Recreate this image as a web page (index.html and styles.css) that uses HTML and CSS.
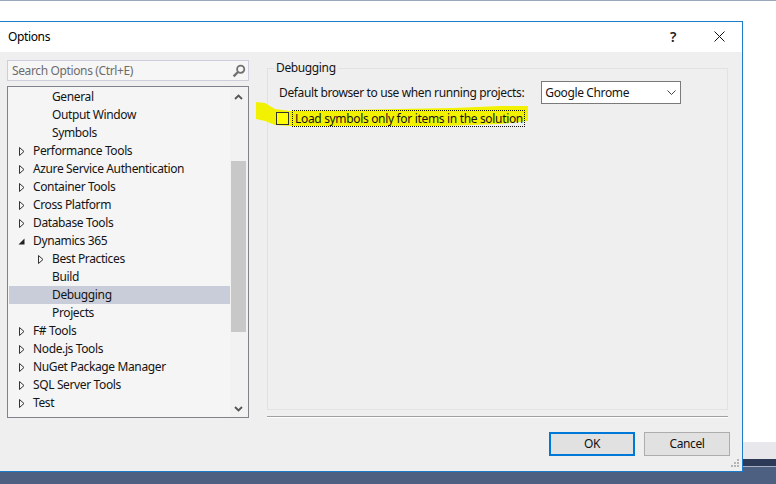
FILE: index.html
```html
<!DOCTYPE html>
<html lang="en">
<head>
<meta charset="utf-8">
<title>Options</title>
<link rel="stylesheet" href="styles.css">
</head>
<body>
<div class="desktop">
  <div class="backdrop">
    <div class="bd-top"></div>
    <div class="bd-white"></div>
    <div class="bd-gray"></div>
    <div class="bd-dark"></div>
    <div class="bd-blue"></div>
  </div>
  <div class="dialog">
    <header class="titlebar">
      <span class="title">Options</span>
      <span class="help">?</span>
      <svg class="close" width="11" height="11" viewBox="0 0 11 11"><path d="M0.5 0.5L10.5 10.5M10.5 0.5L0.5 10.5" stroke="#111" stroke-width="1" fill="none"/></svg>
    </header>
    <div class="body">
      <div class="main">
        <aside class="left">
          <div class="search">
            <span class="search-text">Search Options (Ctrl+E)</span>
            <svg class="search-icon" width="14" height="14" viewBox="0 0 14 14"><circle cx="8.7" cy="5.2" r="3.6" fill="none" stroke="#717171" stroke-width="1.8"/><path d="M6 8L1.6 12.4" stroke="#717171" stroke-width="2.4" fill="none"/></svg>
          </div>
          <div class="tree">
            <ul class="rows">
              <li class="row l2">General</li>
              <li class="row l2">Output Window</li>
              <li class="row l2">Symbols</li>
              <li class="row l1"><svg class="tw" width="7" height="11" viewBox="0 0 7 11"><path d="M1.5 1.5L6 5.5L1.5 9.5Z" fill="none" stroke="#333" stroke-width="1"/></svg>Performance Tools</li>
              <li class="row l1"><svg class="tw" width="7" height="11" viewBox="0 0 7 11"><path d="M1.5 1.5L6 5.5L1.5 9.5Z" fill="none" stroke="#333" stroke-width="1"/></svg>Azure Service Authentication</li>
              <li class="row l1"><svg class="tw" width="7" height="11" viewBox="0 0 7 11"><path d="M1.5 1.5L6 5.5L1.5 9.5Z" fill="none" stroke="#333" stroke-width="1"/></svg>Container Tools</li>
              <li class="row l1"><svg class="tw" width="7" height="11" viewBox="0 0 7 11"><path d="M1.5 1.5L6 5.5L1.5 9.5Z" fill="none" stroke="#333" stroke-width="1"/></svg>Cross Platform</li>
              <li class="row l1"><svg class="tw" width="7" height="11" viewBox="0 0 7 11"><path d="M1.5 1.5L6 5.5L1.5 9.5Z" fill="none" stroke="#333" stroke-width="1"/></svg>Database Tools</li>
              <li class="row l1"><svg class="tw" width="7" height="11" viewBox="0 0 7 11"><path d="M0.5 8.5L6.5 2.5V8.5Z" fill="#222"/></svg>Dynamics 365</li>
              <li class="row l2t"><svg class="tw" width="7" height="11" viewBox="0 0 7 11"><path d="M1.5 1.5L6 5.5L1.5 9.5Z" fill="none" stroke="#333" stroke-width="1"/></svg>Best Practices</li>
              <li class="row l2">Build</li>
              <li class="row l2 selected">Debugging</li>
              <li class="row l2">Projects</li>
              <li class="row l1"><svg class="tw" width="7" height="11" viewBox="0 0 7 11"><path d="M1.5 1.5L6 5.5L1.5 9.5Z" fill="none" stroke="#333" stroke-width="1"/></svg>F# Tools</li>
              <li class="row l1"><svg class="tw" width="7" height="11" viewBox="0 0 7 11"><path d="M1.5 1.5L6 5.5L1.5 9.5Z" fill="none" stroke="#333" stroke-width="1"/></svg>Node.js Tools</li>
              <li class="row l1"><svg class="tw" width="7" height="11" viewBox="0 0 7 11"><path d="M1.5 1.5L6 5.5L1.5 9.5Z" fill="none" stroke="#333" stroke-width="1"/></svg>NuGet Package Manager</li>
              <li class="row l1"><svg class="tw" width="7" height="11" viewBox="0 0 7 11"><path d="M1.5 1.5L6 5.5L1.5 9.5Z" fill="none" stroke="#333" stroke-width="1"/></svg>SQL Server Tools</li>
              <li class="row l1"><svg class="tw" width="7" height="11" viewBox="0 0 7 11"><path d="M1.5 1.5L6 5.5L1.5 9.5Z" fill="none" stroke="#333" stroke-width="1"/></svg>Test</li>
            </ul>
            <div class="scrollbar">
              <svg class="arrow" width="9" height="6" viewBox="0 0 9 6"><path d="M1 5L4.5 1.5L8 5" fill="none" stroke="#555" stroke-width="1.8"/></svg>
              <div class="track"><div class="thumb"></div></div>
              <svg class="arrow" width="9" height="6" viewBox="0 0 9 6"><path d="M1 1L4.5 4.5L8 1" fill="none" stroke="#555" stroke-width="1.8"/></svg>
            </div>
          </div>
        </aside>
        <section class="right">
          <fieldset class="group">
            <legend class="legend">Debugging</legend>
            <div class="browser-row">
              <span>Default browser to use when running projects:</span>
              <div class="combo"><span>Google Chrome</span><svg width="9" height="5" viewBox="0 0 9 5"><path d="M0.5 0.5L4.5 4.5L8.5 0.5" fill="none" stroke="#444" stroke-width="1"/></svg></div>
            </div>
            <div class="check-row">
              <svg class="marker" width="280" height="32" viewBox="0 0 280 32"><path d="M2 3L11 4L16 7L21 10L36 12L90 11L146 10L200 9L246 7L274 7L274 22L246 25L190 27L120 27L36 27L21 26L11 22L2 20Z" fill="#f2f200"/></svg>
              <span class="box"></span>
              <span class="check-label">Load symbols only for items in the solution</span>
            </div>
          </fieldset>
          <div class="sep"></div>
        </section>
      </div>
      <footer class="buttons">
        <button class="btn default">OK</button>
        <button class="btn">Cancel</button>
      </footer>
      <svg class="grip" width="10" height="10" viewBox="0 0 10 10"><path d="M7 0h2v2H7zM4 3h2v2H4zM7 3h2v2H7zM1 6h2v2H1zM4 6h2v2H4zM7 6h2v2H7z" fill="#b5b5b5"/></svg>
    </div>
  </div>
</div>
</body>
</html>
```
FILE: styles.css
```css
* { box-sizing: border-box; }
html, body { margin: 0; padding: 0; }
body { width: 776px; height: 484px; overflow: hidden; background: #fff; font-family: "Noto Sans", "Open Sans", sans-serif; font-size: 12px; letter-spacing: -0.37px; color: #141414; }
.desktop { position: relative; width: 776px; height: 484px; }
.backdrop { position: absolute; inset: 0; display: flex; flex-direction: column; }
.bd-top { height: 1px; background: #9ba8bb; }
.bd-white { height: 441px; background: #fff; }
.bd-gray { height: 17px; background: #e8e8ec; }
.bd-dark { height: 8px; background: #2c3a58; border-bottom: 1px solid #a8b2c4; }
.bd-blue { flex: 1; background: #4d6082; }
.dialog { position: absolute; left: -1px; top: 21px; width: 744px; height: 451px; border: 1px solid #1b7ccb; background: #efefef; display: flex; flex-direction: column; }
.titlebar { height: 30px; background: #fff; display: flex; align-items: center; padding: 0 0 2px 8px; flex: none; }
.title { color: #000; flex: 1; }
.help { font-size: 14px; font-weight: 600; margin-right: 38px; color: #222; }
.close { margin-right: 17px; }
.body { position: relative; flex: 1; display: flex; flex-direction: column; min-height: 0; }
.main { display: flex; padding: 8px 0 0 7px; flex: 1; min-height: 0; }
.left { width: 242px; display: flex; flex-direction: column; gap: 5px; flex: none; }
.search { height: 21px; background: #f6f6f6; border: 1px solid #ccceDB; display: flex; align-items: center; justify-content: space-between; padding: 0 2px 0 4px; }
.search-text { color: #6d6d6d; }
.tree { height: 332px; background: #f5f5f5; border: 1px solid #82828c; display: flex; padding-left: 1px; }
.rows { list-style: none; margin: 0; padding: 1px 0 0; width: 221px; flex: none; }
.row { height: 18px; line-height: 18px; display: flex; align-items: center; white-space: nowrap; }
.l1 { padding-left: 9px; }
.l2 { padding-left: 43px; }
.l2t { padding-left: 28px; }
.tw { margin-right: 8px; flex: none; }
.selected { background: #c9cdda; }
.scrollbar { width: 18px; display: flex; flex-direction: column; align-items: center; background: #f2f2f2; padding: 7px 1px 5px 0; }
.track { flex: 1; width: 15px; padding-top: 61px; }
.thumb { height: 171px; background: #c8c8c8; }
.arrow { flex: none; }
.right { flex: 1; padding: 0 14px 0 18px; display: flex; flex-direction: column; }
.group { margin: 0; padding: 5px 10px 0 11px; height: 350px; border: 1px solid #e2e2e2; }
.legend { padding: 0 2px; margin-left: -5px; line-height: 16px; }
.browser-row { display: flex; align-items: center; gap: 17px; height: 22px; }
.combo { width: 140px; height: 23px; background: #fff; border: 1px solid #7a7a7a; display: flex; align-items: center; justify-content: space-between; padding: 0 4px 0 3px; }
.check-row { position: relative; display: flex; align-items: center; height: 16px; margin-top: 7px; gap: 4px; }
.marker { position: absolute; left: -25px; top: -11px; }
.box { position: relative; width: 13px; height: 13px; border: 1px solid #333; background: #ff0; flex: none; margin-left: -3px; }
.check-label { position: relative; outline: 1px dotted #111; padding: 0 1px 0 2px; line-height: 15px; white-space: nowrap; color: #141414; letter-spacing: -0.33px; }
.sep { height: 2px; margin-top: 6px; border-top: 1px solid #a0a0a0; border-bottom: 1px solid #fff; }
.buttons { display: flex; justify-content: flex-end; gap: 9px; padding: 0 12px 15px 0; flex: none; }
.btn { width: 86px; height: 24px; background: #e1e1e1; border: 1px solid #adadad; font: inherit; letter-spacing: inherit; color: #111; padding: 0 0 2px; }
.default { border: 2px solid #0078d7; }
.grip { position: absolute; right: 2px; bottom: 2px; }
```
